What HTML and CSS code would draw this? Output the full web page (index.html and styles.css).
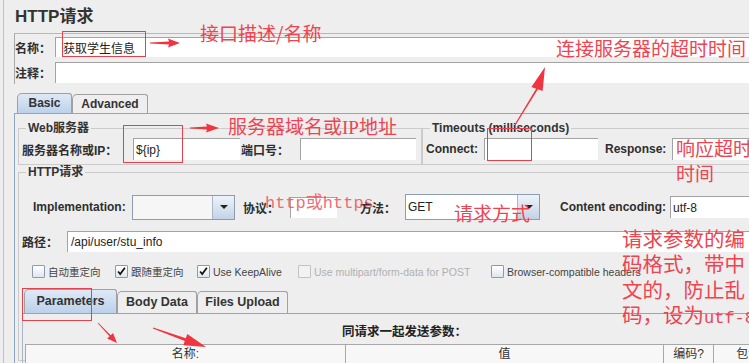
FILE: index.html
```html
<!DOCTYPE html>
<html lang="zh-CN">
<head>
<meta charset="utf-8">
<title>HTTP请求</title>
<link rel="stylesheet" href="styles.css">
</head>
<body>
<div class="app">
  <div class="title">HTTP请求</div>
  <div class="name-panel">
    <div class="row r-name"><span class="lbl">名称：</span><div class="field grow">获取学生信息</div></div>
    <div class="row r-comment"><span class="lbl">注释：</span><div class="field grow"></div></div>
  </div>
  <div class="tabs">
    <div class="tab sel t-basic">Basic</div>
    <div class="tab t-adv">Advanced</div>
  </div>
  <div class="tabpanel">
    <div class="servers">
      <fieldset class="fs fs-web">
        <legend>Web服务器</legend>
        <div class="row srow">
          <span class="lbl l-ip">服务器名称或IP：</span>
          <div class="field f-ip">${ip}</div>
          <span class="lbl l-port">端口号：</span>
          <div class="field f-port"></div>
        </div>
      </fieldset>
      <fieldset class="fs fs-time">
        <legend>Timeouts (milliseconds)</legend>
        <div class="row srow">
          <span class="lbl l-conn">Connect:</span>
          <div class="field f-conn"></div>
          <span class="lbl l-resp">Response:</span>
          <div class="field grow"></div>
        </div>
      </fieldset>
    </div>
    <fieldset class="fs fs-http">
      <legend>HTTP请求</legend>
      <div class="row r-impl">
        <span class="lbl l-impl">Implementation:</span>
        <div class="combo c-impl"><div class="cval"></div><div class="cbtn"><span class="tri"></span></div></div>
        <span class="lbl l-proto">协议：</span>
        <div class="field f-proto"></div>
        <span class="lbl l-meth">方法：</span>
        <div class="combo c-meth"><div class="cval">GET</div><div class="cbtn"><span class="tri"></span></div></div>
        <span class="lbl l-enc">Content encoding:</span>
        <div class="field f-enc grow">utf-8</div>
      </div>
      <div class="row r-path">
        <span class="lbl l-path">路径：</span>
        <div class="field grow f-path">/api/user/stu_info</div>
      </div>
      <div class="row r-checks">
        <div class="chk k1"><span class="box"></span><span class="clbl">自动重定向</span></div>
        <div class="chk k2"><span class="box"><svg viewBox="0 0 13 13" width="11" height="11"><path d="M2.5 6.5 L5 9.5 L10.5 2" fill="none" stroke="#111" stroke-width="2"/></svg></span><span class="clbl">跟随重定向</span></div>
        <div class="chk k3"><span class="box"><svg viewBox="0 0 13 13" width="11" height="11"><path d="M2.5 6.5 L5 9.5 L10.5 2" fill="none" stroke="#111" stroke-width="2"/></svg></span><span class="clbl">Use KeepAlive</span></div>
        <div class="chk k4 dis"><span class="box"></span><span class="clbl">Use multipart/form-data for POST</span></div>
        <div class="chk k5"><span class="box"></span><span class="clbl">Browser-compatible headers</span></div>
      </div>
      <div class="subtabs">
        <div class="tab sel s-par">Parameters</div>
        <div class="tab s-body">Body Data</div>
        <div class="tab s-files">Files Upload</div>
      </div>
      <div class="subpanel">
        <div class="caption">同请求一起发送参数：</div>
        <div class="thead">
          <div class="th c1">名称:</div>
          <div class="th c2">值</div>
          <div class="th c3">编码?</div>
          <div class="th c4">包含等于?</div>
        </div>
      </div>
    </fieldset>
  </div>

  <div class="annot">
    <div class="note n1">接口描述/名称</div>
    <div class="note n2">连接服务器的超时时间</div>
    <div class="note n3">服务器域名或<span class="ser">IP</span>地址</div>
    <div class="note n4">响应超时<br>时间</div>
    <div class="note n5">http或https</div>
    <div class="note n6">请求方式</div>
    <div class="note n7">请求参数的编<br>码格式，带中<br>文的，防止乱<br>码，设为<span class="mono">utf-8</span></div>
    <div class="rbox b1"></div>
    <div class="rbox b2"></div>
    <div class="rbox b3"></div>
    <div class="rbox b4"></div>
    <svg class="arrows" width="749" height="363" viewBox="0 0 749 363">
      <g fill="#ee3540">
        <polygon points="150,42.5 169,41.6 168,38.5 180,43 168,47.5 169,44.4 150,43.5"/>
        <polygon points="190,127.5 207,126.6 206,123.5 219,128 206,132.5 207,129.4 190,128.5"/>
        <polygon points="514.5,124.8 536.1,88.7 531.4,86.9 545,67 542.6,91.1 537.9,89.3 515.5,125.2"/>
        <polygon points="98.3,322.7 110.7,335.2 113,333 117,343 107.2,338.5 109.5,336.3 97.7,323.3"/>
        <polygon points="153.2,327.5 185.8,338.2 187.3,334 206,347 183.3,345.2 184.8,341 152.8,328.5"/>
      </g>
    </svg>
  </div>
</div>
</body>
</html>
```

FILE: styles.css
```css
* { box-sizing: border-box; }
html, body { margin: 0; width: 749px; height: 363px; overflow: hidden; }
body {
  background: #eeeeee;
  font-family: "Liberation Sans", "Noto Sans CJK SC", sans-serif;
  font-size: 12px;
  color: #333;
}
.app {
  position: relative;
  width: 1000px;
  height: 363px;
  margin-left: 3px;
  border-left: 1px solid #c0c0c0;
  padding-left: 10px;
}
.title {
  height: 33px;
  padding: 6px 0 0 1px;
  font-size: 17px;
  line-height: 22px;
  font-weight: bold;
  color: #333;
}
.name-panel {
  height: 51px;
  border-top: 1px solid #b8b8b8;
  border-left: 1px solid #a8a8a8;
  padding-top: 3px;
}
.row { display: flex; align-items: center; }
.lbl { font-weight: bold; white-space: nowrap; flex: none; color: #2e2e2e; }
.field {
  background: #fff;
  border-top: 1px solid #a3a3a3;
  border-left: 1px solid #a3a3a3;
  height: 100%;
  display: flex;
  align-items: center;
  padding-left: 2px;
  white-space: nowrap;
  flex: none;
  color: #222;
}
.grow { flex: 1; }
.r-name { height: 20px; }
.r-comment { height: 21px; margin-top: 5px; }
.name-panel .lbl { width: 40px; }
.name-panel .field { padding-left: 7px; }

/* tabs */
.tabs {
  display: flex;
  align-items: flex-end;
  height: 21px;
  margin-top: 8px;
  padding-left: 3px;
}
.tab {
  flex: none;
  height: 19px;
  border: 1px solid #a0a0a0;
  border-bottom: none;
  border-radius: 5px 3px 0 0;
  font-weight: bold;
  text-align: center;
  line-height: 18px;
  background: #eeeeee;
  color: #333;
}
.tab.sel { height: 20px; background: linear-gradient(#dfe9f6, #bcd1ea); }
.t-basic { width: 55px; }
.t-adv { width: 76px; }

.tabpanel {
  height: 250px;
  border-top: 1px solid #8ea5c6;
  border-left: 1px solid #8ea5c6;
  padding: 7px 0 0 3px;
}

/* fieldsets */
.servers { display: flex; }
fieldset.fs {
  margin: 0;
  border: 1px solid #cbcbcb;
  min-width: 0;
}
.fs legend {
  padding: 0 2px;
  margin-left: 4px;
  font-weight: bold;
  font-size: 12px;
  line-height: 14px;
  color: #333;
}
.fs-web { width: 404px; padding: 3px 0 4px 3px; }
.fs-time { flex: 1; margin-left: 4px; padding: 3px 0 4px 3px; }
.srow { height: 22px; }
.l-ip { width: 111px; }
.f-ip { width: 107px; }
.l-port { width: 59px; margin-left: 1px; }
.f-port { width: 116px; }
.l-conn { width: 58px; }
.f-conn { width: 114px; }
.l-resp { width: 67px; margin-left: 7px; }

.fs-http { margin-top: 4px; padding: 0 0 0 3px; height: 196px; }
.r-impl { margin-top: 15px; height: 26px; padding-left: 11px; }
.l-impl { width: 99px; }
.combo {
  flex: none;
  display: flex;
  border: 1px solid #8d9db0;
  background: #f6f6f6;
}
.c-impl { width: 103px; height: 25px; }
.c-meth { width: 135px; height: 26px; }
.cval {
  flex: 1;
  display: flex;
  align-items: center;
  padding-left: 2px;
  color: #222;
}
.c-meth .cval { background: #fff; }
.cbtn {
  width: 22px;
  border-left: 1px solid #a9b8c9;
  background: linear-gradient(#eef3f9, #c3d3e5);
  display: flex;
  align-items: center;
  justify-content: center;
}
.tri {
  width: 0;
  height: 0;
  border-left: 4px solid transparent;
  border-right: 4px solid transparent;
  border-top: 4px solid #222;
}
.l-proto { width: 47px; margin-left: 8px; }
.f-proto { width: 47px; height: 21px; }
.l-meth { width: 45px; margin-left: 23px; }
.l-enc { width: 110px; margin-left: 20px; }
.f-enc { height: 22px; }

.r-path { margin-top: 11px; height: 21px; }
.l-path { width: 45px; }
.f-path { padding-left: 3px; }

.r-checks { margin-top: 13px; height: 13px; padding-left: 10px; }
.chk { display: flex; align-items: center; flex: none; }
.k1 { width: 83px; }
.k2 { width: 82px; }
.k3 { width: 101px; }
.k4 { width: 193px; }
.box {
  width: 13px;
  height: 13px;
  border: 1px solid #8a9bb0;
  border-radius: 1px;
  background: linear-gradient(#ffffff, #dfe6ee);
  display: flex;
  align-items: center;
  justify-content: center;
  flex: none;
}
.clbl { margin-left: 3px; font-size: 10.5px; color: #444; white-space: nowrap; }
.dis .box { border-color: #c2c2c2; background: #f2f2f2; }
.dis .clbl { color: #b0b0b0; }

.subtabs {
  display: flex;
  align-items: flex-end;
  height: 24px;
  margin-top: 11px;
  padding-left: 2px;
}
.subtabs .tab { height: 22px; line-height: 21px; font-size: 12.5px; }
.subtabs .tab.sel { height: 24px; line-height: 23px; }
.s-par { width: 93px; }
.s-body { width: 80px; }
.s-files { width: 91px; }

.subpanel {
  height: 60px;
  border-top: 1px solid #8ea5c6;
  border-left: 1px solid #a5b5ca;
  padding-left: 2px;
}
.caption {
  margin-top: 11px;
  line-height: 14px;
  padding-left: 317px;
  font-weight: bold;
  font-size: 12.5px;
  color: #222;
}
.thead { display: flex; margin-top: 5px; height: 20px; }
.th {
  flex: none;
  border-top: 1px solid #a8a8a8;
  border-left: 1px solid #a8a8a8;
  background: #f7f7f7;
  text-align: center;
  line-height: 19px;
  color: #333;
}
.c1 { width: 320px; }
.c2 { width: 318px; }
.c3 { width: 50px; }
.c4 { width: 100px; }

/* annotations */
.annot {
  position: absolute;
  left: -4px;
  top: 0;
  width: 749px;
  height: 363px;
  pointer-events: none;
}
.note {
  position: absolute;
  color: #ee4450;
  font-family: "Noto Sans CJK SC", sans-serif;
  font-size: 19px;
  line-height: 1;
  white-space: nowrap;
}
.ser { font-family: "Liberation Serif", serif; }
.mono { font-family: "Liberation Mono", monospace; font-size: 17px; }
.n1 { left: 200px; top: 23px; }
.n2 { left: 556px; top: 38px; }
.n3 { left: 228px; top: 116px; }
.n4 { left: 676px; top: 135px; line-height: 25px; }
.n5 {
  left: 265px;
  top: 195px;
  font-family: "Liberation Mono", "Noto Sans CJK SC", monospace;
  font-size: 17px;
  color: rgba(236, 70, 82, 0.8);
}
.n6 { left: 454px; top: 203px; }
.n7 { left: 622px; top: 226px; font-size: 20.5px; line-height: 25.3px; }
.rbox { position: absolute; border: 1px solid #e6404b; }
.b1 { left: 62px; top: 31px; width: 84px; height: 26px; }
.b2 { left: 123px; top: 125px; width: 60px; height: 38px; }
.b3 { left: 487px; top: 128px; width: 45px; height: 33px; }
.b4 { left: 22px; top: 288px; width: 70px; height: 33px; }
.arrows { position: absolute; left: 0; top: 0; }
```
